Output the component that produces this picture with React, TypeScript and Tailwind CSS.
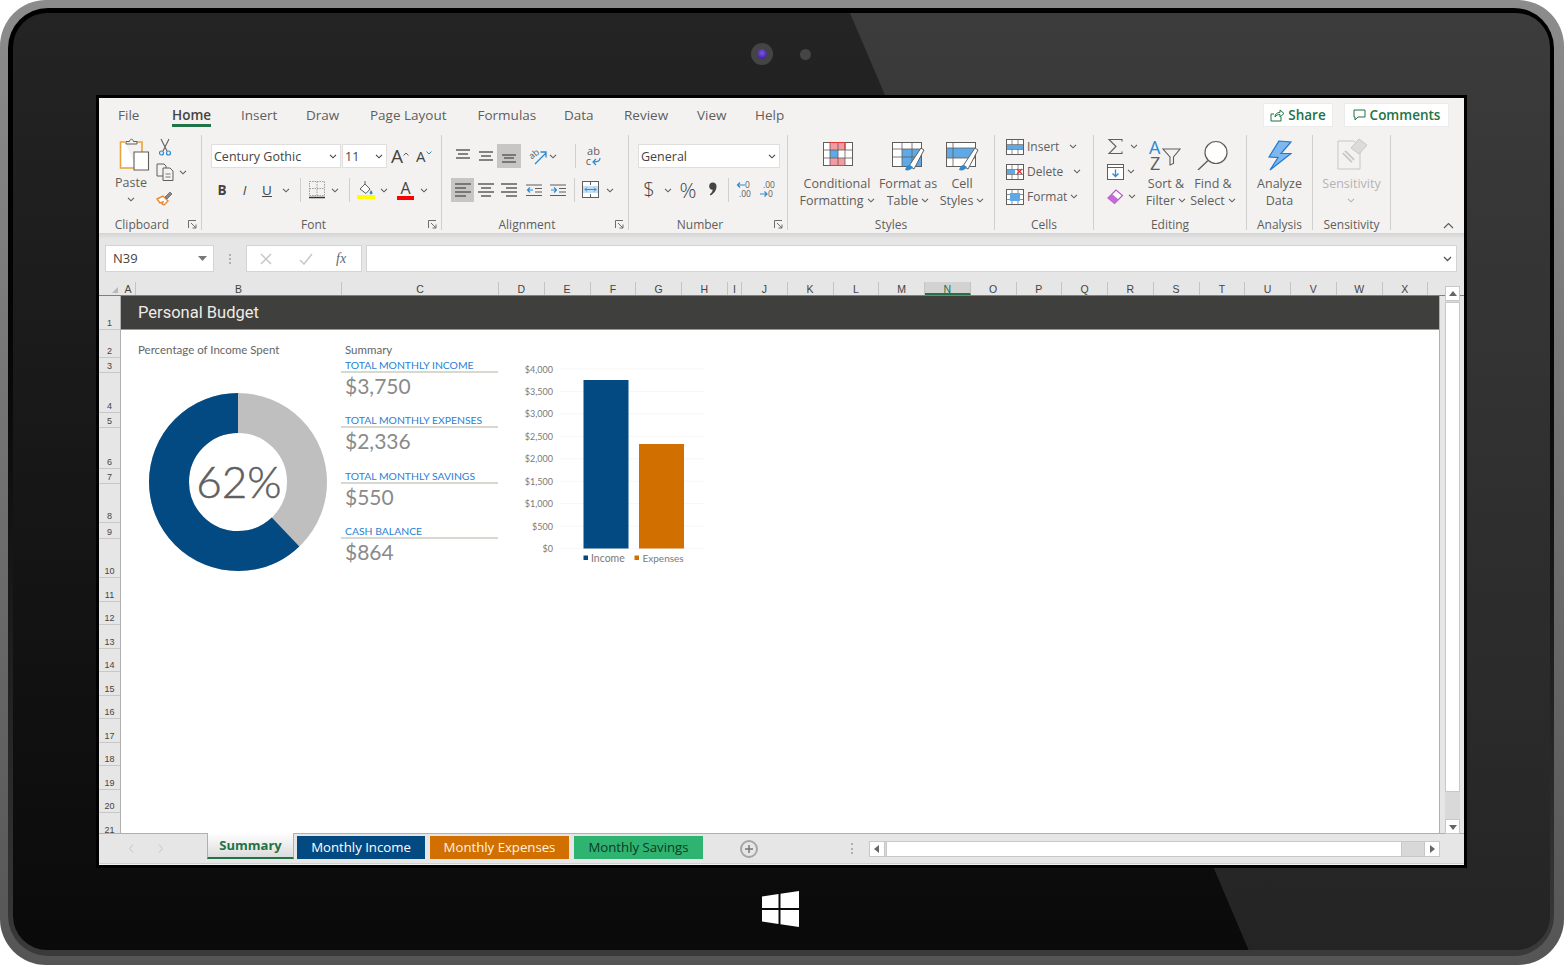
const gray = "#605e5c";
const blue = "#2a8ad4";

const Chev = ({ color = gray }: { color?: string }) => (
  <svg width="8" height="5" viewBox="0 0 8 5" className="shrink-0">
    <path d="M1 .8l3 3 3-3" stroke={color} strokeWidth="1.1" fill="none" />
  </svg>
);

const ChevBox = ({ className = "w-[10px] ml-[4px]" }: { className?: string }) => (
  <span className={"flex justify-center shrink-0 " + className}>
    <Chev />
  </span>
);

const Sep = ({ className }: { className?: string }) => (
  <span className={"w-px h-[24px] bg-[#d2d0ce] shrink-0 " + (className ?? "")} />
);

const Lines = ({ rows }: { rows: number[][] }) => (
  <svg width="16" height="16" viewBox="0 0 16 16" className="shrink-0">
    {rows.map((r, i) => (
      <path key={i} d={`M${r[0]} ${r[2]}H${r[1]}`} stroke={gray} strokeWidth="1.3" />
    ))}
  </svg>
);

const PasteIcon = () => (
  <svg width="32" height="33" viewBox="0 0 32 33" className="ml-[7px]">
    <path d="M6 4H1.500v26H17" stroke="#e8a33d" strokeWidth="1.6" fill="#fff" />
    <path d="M18 4h5v10" stroke="#e8a33d" strokeWidth="1.6" fill="none" />
    <path d="M7 6V3.500h3.500C11 .5 14 .5 14.500 3.500H18V6z" stroke={gray} fill="#f3f2f1" />
    <path d="M15 14h14.500v18H15z" stroke={gray} strokeWidth="1.1" fill="#fff" />
  </svg>
);

const Scissors = () => (
  <svg width="18" height="18" viewBox="0 0 18 18">
    <path d="M5 1l6 12M13 1L7 13" stroke={gray} strokeWidth="1.1" fill="none" />
    <circle cx="5.500" cy="15" r="2" stroke={blue} strokeWidth="1.2" fill="none" />
    <circle cx="12.500" cy="15" r="2" stroke={blue} strokeWidth="1.2" fill="none" />
  </svg>
);

const CopyIcon = () => (
  <svg width="18" height="18" viewBox="0 0 18 18">
    <path d="M7 13H1V1h7l2 2v2" stroke={gray} fill="none" />
    <path d="M7 5h7l3 3v9.500H7z" stroke={gray} fill="#f3f2f1" />
    <path d="M9.500 11h5M9.500 14h5" stroke={gray} strokeWidth=".8" />
  </svg>
);

const Painter = () => (
  <svg width="18" height="16" viewBox="0 0 18 16">
    <path d="M1 9l6-3 5 5-4 4-2-1 1-2-3 1z" fill="#fff" stroke="#e8882a" strokeWidth="1.4" />
    <path d="M9 7l5-5 2 2-5 5z" fill="#8a8886" stroke={gray} strokeWidth=".7" />
  </svg>
);

const Launcher = () => (
  <svg width="9" height="9" viewBox="0 0 9 9" className="absolute right-[4px] top-[2px]">
    <path d="M.5 8V.5H8M3 3l5 5M8 4.500V8H4.500" stroke={gray} strokeWidth=".9" fill="none" />
  </svg>
);

const Caret = ({ color, down }: { color: string; down?: boolean }) => (
  <svg width="6" height="4" viewBox="0 0 6 4" className="mb-[11px]">
    <path d={down ? "M.5 .5l2.500 2.500 2.500-2.500" : "M.5 3.500l2.500-2.500 2.500 2.500"} stroke={color} fill="none" />
  </svg>
);

const BorderIcon = () => (
  <svg width="16" height="18" viewBox="0 0 16 18" className="ml-[2px] shrink-0">
    <path d="M.5 .5h15v14H.5zM8 .5v14M.5 7.500h15" stroke="#a19f9d" strokeDasharray="1.500 1" fill="none" />
    <path d="M0 16.500h16" stroke="#333" strokeWidth="1.400" />
  </svg>
);

const FillIcon = () => (
  <svg width="18" height="20" viewBox="0 0 18 20" className="ml-[7px] shrink-0">
    <path d="M3 9l5-5 5 5-4 4.500z" fill="#fff" stroke={gray} />
    <path d="M8 4V1" stroke={gray} />
    <path d="M14 10c1 1.500 1.500 2 1.500 3a1.300 1.300 0 0 1-2.800 0c0-1 .6-1.500 1.300-3z" fill={blue} />
    <rect x="0" y="15" width="18" height="4" fill="#ffff00" />
  </svg>
);

const Orient = () => (
  <svg width="19" height="18" viewBox="0 0 19 18" className="ml-[7px] shrink-0 overflow-visible">
    <text x="1" y="11" fontSize="9" fill={gray} transform="rotate(-40 5 8)" fontFamily="'Open Sans',sans-serif">ab</text>
    <path d="M7 17L18 6M12.500 5h5.500v5.500" stroke={blue} strokeWidth="1.300" fill="none" />
  </svg>
);

const Indent = ({ flip, className }: { flip?: boolean; className: string }) => (
  <svg width="16" height="16" viewBox="0 0 16 16" className={"shrink-0 " + className}>
    <path d="M0 3h16M9 6.500h7M9 10h7M0 13.500h16" stroke={gray} strokeWidth="1.100" />
    <path d={flip ? "M1 8h5M4 5.500L6.500 8 4 10.500" : "M7 8H1.500M4 5.500L1.500 8 4 10.500"} stroke={blue} strokeWidth="1.200" fill="none" />
  </svg>
);

const Merge = () => (
  <svg width="17" height="18" viewBox="0 0 17 18" className="ml-[7px] shrink-0">
    <rect x=".5" y=".5" width="16" height="16" fill="#fff" stroke={gray} />
    <rect x="1" y="5" width="15" height="7" fill="#bfe0f7" />
    <path d="M3 8.500h11M5 6.500l-2 2 2 2M12 6.500l2 2-2 2" stroke={blue} fill="none" />
    <path d="M8.500 1v3M8.500 13v3" stroke={gray} />
  </svg>
);

const DecimalIcon = ({ inc, className }: { inc?: boolean; className: string }) => (
  <svg width="18" height="20" viewBox="0 0 18 20" className={"shrink-0 overflow-visible " + className}>
    <text x={inc ? 9 : 4} y="8" fontSize="8.500" fill={gray} fontFamily="'Open Sans',sans-serif">{inc ? "0" : ".00"}</text>
    <text x={inc ? 3 : 9} y="17" fontSize="8.500" fill={gray} fontFamily="'Open Sans',sans-serif">{inc ? ".00" : "0"}</text>
    <path d={inc ? "M9 5H1.500M4 2.500L1.500 5 4 7.500" : "M1 14h7M5.500 11.500L8 14l-2.500 2.500"} stroke={blue} strokeWidth="1.200" fill="none" />
  </svg>
);

const CommaIcon = () => (
  <svg width="8" height="14" viewBox="0 0 8 14" className="ml-[11px] mr-[11px] shrink-0 -mt-[2px]">
    <path d="M4 .5a3.500 3.500 0 0 1 3.500 3.800c0 4-2.500 7.500-6 9.200L.8 12.400C2.500 11 3.500 9.500 3.700 7.800A3.600 3.600 0 0 1 4 .5z" fill="#444" />
  </svg>
);

const CondIcon = () => (
  <svg width="30" height="24" viewBox="0 0 30 24">
    <rect x=".5" y=".5" width="29" height="23" fill="#fff" stroke={gray} />
    <rect x="7" y="1" width="15" height="7" fill="#f59aa0" />
    <rect x="7" y="16" width="15" height="7" fill="#f59aa0" />
    <rect x="7" y="8" width="8" height="8" fill="#5ea9e6" />
    <path d="M7 .5v23M15 .5v23M22 .5v23M.5 8h29M.5 16h29" stroke={gray} strokeWidth=".8" />
    <path d="M7 .5h15v7.500M7 23.500h15" stroke="#e23a3a" strokeWidth="1.200" fill="none" />
  </svg>
);

const Brush = () => (
  <>
    <path d="M17 24L29 6l3 2-10 19z" fill="#fff" stroke={gray} />
    <path d="M13 28c3 1 6 0 8-3l-3-2c-3 0-4 2-5 5z" fill={blue} />
  </>
);

const TableIcon = () => (
  <svg width="33" height="30" viewBox="0 0 33 30">
    <rect x=".5" y=".5" width="29" height="24" fill="#fff" stroke={gray} />
    <rect x="10" y="7" width="19" height="17" fill="#5ea9e6" />
    <path d="M10 .5v24M20 .5v24M.5 7h29M.5 15h29" stroke={gray} strokeWidth=".8" />
    <Brush />
  </svg>
);

const CellStyleIcon = () => (
  <svg width="33" height="30" viewBox="0 0 33 30">
    <rect x=".5" y=".5" width="29" height="24" fill="#fff" stroke={gray} />
    <rect x="1" y="6" width="28" height="10" fill="#5ea9e6" />
    <path d="M7 .5v24M.5 6h29M.5 16h29" stroke={gray} strokeWidth=".8" />
    <Brush />
  </svg>
);

const GridSmall = ({ children }: { children?: React.ReactNode }) => (
  <svg width="18" height="16" viewBox="0 0 18 16" className="shrink-0 ml-[11px]">
    <rect x=".5" y=".5" width="17" height="15" fill="#fff" stroke={gray} />
    <path d="M6 .5v15M12 .5v15M.5 5.500h17M.5 10.500h17" stroke={gray} strokeWidth=".7" />
    {children}
  </svg>
);

const SumIcon = () => (
  <svg width="17" height="17" viewBox="0 0 17 17" className="shrink-0">
    <path d="M15 3.500V1.500H2l7 7-7 7h13v-2" stroke={gray} strokeWidth="1.100" fill="none" />
  </svg>
);

const FillDown = () => (
  <svg width="17" height="16" viewBox="0 0 17 16" className="shrink-0">
    <rect x=".5" y=".5" width="16" height="15" fill="#fff" stroke={gray} />
    <path d="M.5 3.500h16" stroke={gray} />
    <path d="M8.500 5.500v7M5.500 9.500l3 3 3-3" stroke={blue} strokeWidth="1.300" fill="none" />
  </svg>
);

const Eraser = () => (
  <svg width="17" height="16" viewBox="0 0 17 16" className="shrink-0">
    <path d="M1 9l8-8 6.500 5.500-8 8z" fill="#fff" stroke="#b45cc8" strokeWidth="1.200" />
    <path d="M1 9l4-4 6.500 5.500-4 4z" fill="#c36bd6" />
  </svg>
);

const SortIcon = () => (
  <svg width="34" height="30" viewBox="0 0 34 30" className="overflow-visible">
    <text x="0" y="14" fontSize="18" fill={blue} fontFamily="'Open Sans',sans-serif">A</text>
    <text x="1" y="30" fontSize="18" fill={gray} fontFamily="'Open Sans',sans-serif">Z</text>
    <path d="M14 9h17l-6.500 8v6.500l-3.500 1.500v-8z" fill="#f3f2f1" stroke={gray} strokeWidth="1.100" />
  </svg>
);

const FindIcon = () => (
  <svg width="34" height="30" viewBox="0 0 34 30">
    <circle cx="20" cy="12.500" r="11" fill="#fff" stroke={gray} strokeWidth="1.200" />
    <path d="M12 20.500L2 30" stroke={gray} strokeWidth="1.400" />
  </svg>
);

const Bolt = () => (
  <svg width="24" height="31" viewBox="0 0 24 31">
    <path d="M11 1L23 2 13 13.500 23 13.500 2 30 10 17.500 1 17z" fill="#7fb8ec" stroke="#1f7ad0" strokeWidth="1.200" />
  </svg>
);

const SensIcon = () => (
  <svg width="30" height="32" viewBox="0 0 30 32" className="-mt-[2px]">
    <path d="M1 3h16l6 6v22H1z" fill="#f3f2f1" stroke="#c8c6c4" />
    <path d="M7 14l9 9" stroke="#c8c6c4" strokeWidth="5" />
    <path d="M7 14l9 9" stroke="#f3f2f1" strokeWidth="1.500" />
    <path d="M14 10l8-9 8 6-8 9z" fill="#dcdbd9" stroke="#c8c6c4" />
  </svg>
);

const Group = ({ className, label, launcher, children }: { className: string; label: string; launcher?: boolean; children: React.ReactNode }) => (
  <div className={"h-[95px] border-r border-[#d2d0ce] flex flex-col shrink-0 " + className}>
    <div className="flex-1 min-h-0">{children}</div>
    <div className={"relative h-[13px] -mb-px leading-[13px] text-center text-[12px] text-[#605e5c] " + (launcher ? "pr-[16px]" : "")}>
      {label}
      {launcher && <Launcher />}
    </div>
  </div>
);

const Combo = ({ className, text }: { className: string; text: string }) => (
  <div className={"h-[24px] bg-white border border-[#e1dfdd] flex items-center justify-between pl-[2px] pr-[3px] text-[12.500px] text-[#444] shrink-0 " + className}>
    <span className="pt-[2px]">{text}</span>
    <Chev color="#444" />
  </div>
);

const TallCol = ({ className, icon, lines, muted }: { className: string; icon: React.ReactNode; lines: React.ReactNode[]; muted?: boolean }) => (
  <div className={"flex flex-col items-center shrink-0 pt-[5px] " + className}>
    <div className="h-[30px] flex items-start justify-center">{icon}</div>
    <div className={"mt-[5px] text-center text-[12.500px] leading-[17px] whitespace-nowrap " + (muted ? "text-[#b5b3b1]" : "text-[#605e5c]")}>
      {lines.map((l, i) => (
        <div key={i} className="flex items-center justify-center gap-[3px] h-[17px]">{l}</div>
      ))}
    </div>
  </div>
);

const tabs = [
  { t: "File", c: "w-[73px] pl-[19px]" },
  { t: "Home", c: "w-[69px]", on: true },
  { t: "Insert", c: "w-[65px]" },
  { t: "Draw", c: "w-[64px]" },
  { t: "Page Layout", c: "w-[107.500px]" },
  { t: "Formulas", c: "w-[86.500px]" },
  { t: "Data", c: "w-[60px]" },
  { t: "Review", c: "w-[73px]" },
  { t: "View", c: "w-[58px]" },
  { t: "Help", c: "w-[50px]" },
];

const cols = [
  { l: "A", c: "w-[15px]" }, { l: "B", c: "w-[206px]" }, { l: "C", c: "w-[157px]" },
  { l: "D", c: "w-[45.750px]" }, { l: "E", c: "w-[45.750px]" }, { l: "F", c: "w-[45.750px]" }, { l: "G", c: "w-[45.750px]" }, { l: "H", c: "w-[45.750px]" },
  { l: "I", c: "w-[14.250px]" }, { l: "J", c: "w-[45.750px]" }, { l: "K", c: "w-[45.750px]" }, { l: "L", c: "w-[45.750px]" }, { l: "M", c: "w-[45.750px]" },
  { l: "N", c: "w-[45.750px]", on: true }, { l: "O", c: "w-[45.750px]" }, { l: "P", c: "w-[45.750px]" }, { l: "Q", c: "w-[45.750px]" }, { l: "R", c: "w-[45.750px]" },
  { l: "S", c: "w-[45.750px]" }, { l: "T", c: "w-[45.750px]" }, { l: "U", c: "w-[45.750px]" }, { l: "V", c: "w-[45.750px]" }, { l: "W", c: "w-[45.750px]" }, { l: "X", c: "w-[45.750px]" },
];

const rows = [
  { n: 1, c: "h-[34px]" }, { n: 2, c: "h-[28px]" }, { n: 3, c: "h-[15px]" }, { n: 4, c: "h-[40px]" }, { n: 5, c: "h-[15px]" },
  { n: 6, c: "h-[41px]" }, { n: 7, c: "h-[15px]" }, { n: 8, c: "h-[39px]" }, { n: 9, c: "h-[16px]" }, { n: 10, c: "h-[39px]" },
  ...[11, 12, 13, 14, 15, 16, 17, 18, 19, 20, 21].map((n) => ({ n, c: "h-[23.500px]" })),
];

const summary = [
  { l: "TOTAL MONTHLY INCOME", v: "$3,750", h: "h-[40px]" },
  { l: "TOTAL MONTHLY EXPENSES", v: "$2,336", h: "h-[41px]" },
  { l: "TOTAL MONTHLY SAVINGS", v: "$550", h: "h-[40px]" },
  { l: "CASH BALANCE", v: "$864", h: "h-[40px]" },
];

const ticks = ["$4,000", "$3,500", "$3,000", "$2,500", "$2,000", "$1,500", "$1,000", "$500", "$0"];

const Donut = () => (
  <svg width="178" height="178" viewBox="0 0 178 178" className="block">
    <circle cx="89" cy="89" r="69" fill="none" stroke="#bfbfbf" strokeWidth="40" />
    <circle cx="89" cy="89" r="69" fill="none" stroke="#044a82" strokeWidth="40" strokeDasharray="268.800 433.500" transform="rotate(-90 89 89) scale(1 -1) translate(0 -178)" />
    <text x="90" y="105" textAnchor="middle" fontSize="44" fill="#5f5f5f" stroke="#5f5f5f" strokeWidth=".5" fontWeight="300" fontFamily="Lato,sans-serif">62%</text>
  </svg>
);

const Chart = () => (
  <svg width="220" height="230" viewBox="0 0 220 230" className="block">
    {ticks.map((t, i) => {
      const y = 19 + i * 22.45;
      return (
        <g key={t}>
          <path d={`M62 ${y}H207`} stroke="#f6f6f6" />
          <text x="55" y={y + 3.500} textAnchor="end" fontSize="9" fill="#7a7a7a" fontFamily="Lato,sans-serif">{t}</text>
        </g>
      );
    })}
    <rect x="85.500" y="30" width="45" height="168.500" fill="#044a82" />
    <rect x="141" y="94" width="45" height="104.500" fill="#d16f00" />
    <rect x="85.500" y="205.500" width="4.500" height="4.500" fill="#044a82" />
    <text x="93" y="211.500" fontSize="10.500" fill="#7a7a7a" fontFamily="Lato,sans-serif">Income</text>
    <rect x="136.500" y="205.500" width="4.500" height="4.500" fill="#d16f00" />
    <text x="144.500" y="211.500" fontSize="10" fill="#7a7a7a" fontFamily="Lato,sans-serif">Expenses</text>
  </svg>
);

const Arrow = ({ d }: { d: string }) => (
  <svg width="8" height="8" viewBox="0 0 8 8">
    <path d={d} fill="#666" />
  </svg>
);

export default function App() {
  return (
    <div className="w-[1564px] h-[966px] bg-white overflow-hidden font-['Open_Sans',sans-serif]">
      <div className="w-full h-[965px] rounded-[46px] bg-gradient-to-b from-[#8c8c8c] to-[#555555] pt-[8px] pl-[8px] pr-[10px] pb-[9px]">
        <div className="h-full rounded-[40px] bg-gradient-to-b from-[#000000] to-[#3a3a3a] pt-[5px] pl-[5px] pr-[4px] pb-[6px]">
          <div className="relative h-full rounded-[34px] overflow-hidden bg-gradient-to-b from-[#242424] to-[#0a0a0a] flex flex-col">
            <svg width="1537" height="937" viewBox="0 0 1537 937" className="absolute left-0 top-0">
              <polygon points="837,0 1537,0 1537,937 1235.600,937" fill="#ffffff" fillOpacity="0.11" />
            </svg>

            {/* camera strip */}
            <div className="relative h-[82px] flex items-center shrink-0">
              <div className="ml-[738px] w-[22px] h-[22px] rounded-full bg-[#444444] flex items-center justify-center">
                <div className="w-[10px] h-[10px] rounded-full bg-[radial-gradient(circle_at_50%_40%,#7a5ad8,#2a0f8a)]" />
              </div>
              <div className="ml-[27px] w-[11px] h-[11px] rounded-full bg-[#454545]" />
            </div>

            {/* screen */}
            <div className="relative ml-[83px] w-[1371px] h-[773px] shrink-0 border-[3px] border-black bg-[#f3f2f1] flex flex-col text-[#605e5c]">
              {/* menu tabs */}
              <div className="h-[34px] flex shrink-0 text-[13.500px] leading-[18px]">
                {tabs.map((t) => (
                  <div key={t.t} className={"pt-[8px] shrink-0 " + t.c}>
                    <span className={t.on ? "inline-block border-b-[3px] border-[#217346] font-semibold text-[#444]" : "inline-block"}>{t.t}</span>
                  </div>
                ))}
                <div className="ml-auto mr-[15px] flex gap-[11px] pt-[5px] font-semibold text-[#217346]">
                  <div className="w-[70px] h-[24px] bg-white border border-[#ebebeb] flex items-center justify-center gap-[4px]">
                    <svg width="14" height="13" viewBox="0 0 14 13">
                      <path d="M4 5H1v7h10V8M5 8c0-3 2-4.500 5-4.500V1l4 3.500L10 8V5.500C8 5.500 6 6 5 8z" stroke="#217346" fill="none" />
                    </svg>
                    Share
                  </div>
                  <div className="w-[105px] h-[24px] bg-white border border-[#ebebeb] flex items-center justify-center gap-[4px]">
                    <svg width="13" height="12" viewBox="0 0 13 12">
                      <path d="M1 1h11v7H5l-3 3V8H1z" stroke="#217346" fill="none" />
                    </svg>
                    Comments
                  </div>
                </div>
              </div>

              {/* ribbon */}
              <div className="h-[101px] pt-[3px] flex shrink-0">
                <Group className="w-[103px]" label="Clipboard" launcher>
                  <div className="flex">
                    <div className="ml-[12px] w-[40px] pt-[3px] flex flex-col items-center">
                      <PasteIcon />
                      <div className="h-[18px] mt-[3px] leading-[18px] text-[12.500px]">Paste</div>
                      <div className="mt-[5px]"><Chev /></div>
                    </div>
                    <div className="ml-[5px] pt-[3px] flex flex-col">
                      <Scissors />
                      <div className="mt-[7px] flex items-center"><CopyIcon /><span className="ml-[5px]"><Chev /></span></div>
                      <div className="mt-[9px]"><Painter /></div>
                    </div>
                  </div>
                </Group>

                <Group className="w-[240px]" label="Font" launcher>
                  <div className="pt-[9px] flex items-center h-[33px]">
                    <Combo className="ml-[9px] w-[130px]" text="Century Gothic" />
                    <Combo className="ml-px w-[45px]" text="11" />
                    <span className="ml-[4px] w-[18px] flex items-end text-[19px] leading-[22px] text-[#444]">A<Caret color={gray} /></span>
                    <span className="ml-[7px] w-[17px] flex items-end text-[15px] leading-[20px] text-[#444]">A<Caret color={blue} down /></span>
                  </div>
                  <div className="mt-[10px] flex items-center h-[24px] text-[#444]">
                    <span className="ml-[9px] w-[22px] text-center text-[13.500px] font-bold">B</span>
                    <span className="w-[23px] text-center text-[13.500px] italic">I</span>
                    <span className="w-[22px] text-center text-[13.500px] underline">U</span>
                    <ChevBox className="w-[16px]" />
                    <Sep className="ml-[6px]" />
                    <span className="ml-[6px]"><BorderIcon /></span>
                    <ChevBox className="ml-[5px] w-[10px]" />
                    <Sep className="ml-[9px]" />
                    <FillIcon />
                    <ChevBox />
                    <span className="ml-[8px] w-[17px] flex flex-col items-center leading-[15px] text-[16px]">
                      A
                      <span className="block w-[17px] h-[4px] bg-[#ff0000]" />
                    </span>
                    <ChevBox className="ml-[5px] w-[10px]" />
                  </div>
                </Group>

                <Group className="w-[187px]" label="Alignment" launcher>
                  <div className="pt-[9px] flex items-center h-[33px]">
                    <span className="ml-[13px]"><Lines rows={[[1, 15, 2], [3, 13, 6], [1, 15, 10]]} /></span>
                    <span className="ml-[7px]"><Lines rows={[[1, 15, 4], [3, 13, 8], [1, 15, 12]]} /></span>
                    <span className="ml-[3px] w-[24px] h-[24px] bg-[#c8c6c4] flex items-center justify-center"><Lines rows={[[1, 15, 7], [3, 13, 10], [1, 15, 14]]} /></span>
                    <Orient />
                    <ChevBox className="ml-px w-[10px]" />
                    <Sep className="ml-[17px]" />
                    <span className="ml-[9px] w-[17px] flex flex-col items-center text-[11px] leading-[10px] text-[#605e5c]">
                      <span className="h-[10px]">ab</span>
                      <span className="flex items-center h-[10px]">c<svg width="10" height="9" viewBox="0 0 10 9"><path d="M9 1c0 3-2 4-6 4M5 2L2 5l3 3" stroke={blue} strokeWidth="1.200" fill="none" /></svg></span>
                    </span>
                  </div>
                  <div className="mt-[10px] flex items-center h-[24px]">
                    <span className="ml-[9px] w-[23px] h-[24px] bg-[#c8c6c4] flex items-center justify-center"><Lines rows={[[0, 16, 2], [0, 11, 6], [0, 16, 10], [0, 11, 14]]} /></span>
                    <span className="ml-[4px]"><Lines rows={[[0, 16, 2], [3, 13, 6], [0, 16, 10], [3, 13, 14]]} /></span>
                    <span className="ml-[7px]"><Lines rows={[[0, 16, 2], [5, 16, 6], [0, 16, 10], [5, 16, 14]]} /></span>
                    <Indent className="ml-[9px]" />
                    <Indent className="ml-[8px]" flip />
                    <Sep className="ml-[8px]" />
                    <Merge />
                    <ChevBox className="ml-[6px] w-[10px]" />
                  </div>
                </Group>

                <Group className="w-[159px]" label="Number" launcher>
                  <div className="pt-[9px] flex items-center h-[33px]">
                    <Combo className="ml-[9px] w-[142px]" text="General" />
                  </div>
                  <div className="mt-[10px] flex items-center h-[24px] text-[#444]">
                    <span className="ml-[13px] w-[14px] text-center text-[20px] leading-[24px] font-light">$</span>
                    <ChevBox className="ml-[7px] w-[10px]" />
                    <span className="ml-[5px] w-[20px] text-center text-[21px] leading-[24px] font-light">%</span>
                    <CommaIcon />
                    <Sep />
                    <DecimalIcon inc className="ml-[7px]" />
                    <DecimalIcon className="ml-[5px]" />
                  </div>
                </Group>

                <Group className="w-[207px]" label="Styles">
                  <div className="flex">
                    <TallCol className="ml-[13px] w-[72px]" icon={<span className="block pt-[2px] pl-px"><CondIcon /></span>} lines={["Conditional", <>Formatting <Chev /></>]} />
                    <TallCol className="ml-[7px] w-[56px]" icon={<span className="block pt-[2px] pl-px"><TableIcon /></span>} lines={["Format as", <>Table <Chev /></>]} />
                    <TallCol className="ml-[4px] w-[44px]" icon={<span className="block pt-[2px] pl-px"><CellStyleIcon /></span>} lines={["Cell", <>Styles <Chev /></>]} />
                  </div>
                </Group>

                <Group className="w-[99px]" label="Cells">
                  <div className="flex flex-col text-[12px]">
                    <div className="h-[25px] flex items-center -mt-px">
                      <GridSmall><rect x="1" y="6" width="16" height="4" fill="#5ea9e6" /></GridSmall>
                      <span className="ml-[3px]">Insert</span>
                      <span className="ml-[10px]"><Chev /></span>
                    </div>
                    <div className="h-[25px] flex items-center">
                      <GridSmall><rect x="1" y="6" width="8" height="4" fill="#5ea9e6" /><path d="M11 5l5 5M16 5l-5 5" stroke="#e23a3a" strokeWidth="1.300" /></GridSmall>
                      <span className="ml-[3px]">Delete</span>
                      <span className="ml-[10px]"><Chev /></span>
                    </div>
                    <div className="h-[25px] flex items-center">
                      <GridSmall><rect x="4" y="4" width="10" height="8" fill="#5ea9e6" /></GridSmall>
                      <span className="ml-[3px]">Format</span>
                      <span className="ml-[3px]"><Chev /></span>
                    </div>
                  </div>
                </Group>

                <Group className="w-[153px]" label="Editing">
                  <div className="flex">
                    <div className="-mt-px ml-[13px] w-[39px] flex flex-col">
                      <div className="h-[25px] flex items-center"><SumIcon /><span className="ml-[6px]"><Chev /></span></div>
                      <div className="h-[25px] flex items-center"><FillDown /><span className="ml-[3px]"><Chev /></span></div>
                      <div className="h-[25px] flex items-center"><Eraser /><span className="ml-[4px]"><Chev /></span></div>
                    </div>
                    <TallCol className="w-[40px]" icon={<SortIcon />} lines={["Sort &", <>Filter <Chev /></>]} />
                    <TallCol className="ml-[4px] w-[46px]" icon={<FindIcon />} lines={["Find &", <>Select <Chev /></>]} />
                  </div>
                </Group>

                <Group className="w-[66px]" label="Analysis">
                  <TallCol className="w-full" icon={<Bolt />} lines={["Analyze", "Data"]} />
                </Group>

                <Group className="w-[78px]" label="Sensitivity">
                  <TallCol className="w-full" muted icon={<SensIcon />} lines={["Sensitivity", <Chev color="#b5b3b1" />]} />
                </Group>

                <div className="ml-auto mr-[10px] self-end mb-[4px]">
                  <svg width="11" height="7" viewBox="0 0 11 7"><path d="M1 6l4.500-4.500L10 6" stroke={gray} strokeWidth="1.200" fill="none" /></svg>
                </div>
              </div>

              {/* formula bar */}
              <div className="h-[49px] shrink-0 pt-[12px] bg-gradient-to-b from-[#d4d4d4] via-[#e6e6e6] via-[12%] to-[#e6e6e6]">
                <div className="flex items-center h-[27px]">
                  <div className="ml-[6px] w-[109px] h-[27px] bg-white border border-[#d4d4d4] flex items-center justify-between pl-[7px] pr-[6px] text-[13px] text-[#444]">
                    N39
                    <svg width="9" height="5" viewBox="0 0 9 5"><path d="M0 0h9L4.500 5z" fill="#777" /></svg>
                  </div>
                  <div className="ml-[13px] w-[6px] flex flex-col items-center gap-[2px]">
                    <span className="w-[2px] h-[2px] bg-[#b0b0b0]" />
                    <span className="w-[2px] h-[2px] bg-[#b0b0b0]" />
                    <span className="w-[2px] h-[2px] bg-[#b0b0b0]" />
                  </div>
                  <div className="ml-[13px] w-[116px] h-[27px] bg-white border border-[#d4d4d4] flex items-center">
                    <svg width="12" height="12" viewBox="0 0 12 12" className="ml-[13px]"><path d="M1 1l10 10M11 1L1 11" stroke="#c8c8c8" strokeWidth="1.500" /></svg>
                    <svg width="14" height="12" viewBox="0 0 14 12" className="ml-[27px]"><path d="M1 7l4 4 8-10" stroke="#c8c8c8" strokeWidth="1.500" fill="none" /></svg>
                    <span className="ml-[23px] text-[14px] italic text-[#666] font-['Liberation_Serif',serif]">fx</span>
                  </div>
                  <div className="ml-[4px] w-[1091px] h-[27px] bg-white border border-[#d4d4d4] flex items-center justify-end pr-[4px]">
                    <svg width="9" height="6" viewBox="0 0 9 6"><path d="M1 1l3.500 3.500L8 1" stroke="#555" strokeWidth="1.300" fill="none" /></svg>
                  </div>
                </div>
              </div>

              {/* column headers */}
              <div className="h-[14px] shrink-0 flex bg-[#e6e6e6] border-b border-[#7f7f7f] font-['Liberation_Sans',sans-serif] text-[10.500px] leading-[13px] text-[#444]">
                <div className="w-[22px] shrink-0 flex items-end justify-end pr-[3px] pb-[2px]">
                  <svg width="6" height="6" viewBox="0 0 6 6"><path d="M6 0v6H0z" fill="#b8b8b8" /></svg>
                </div>
                {cols.map((c) => (
                  <div key={c.l} className={"shrink-0 text-center pt-px border-r border-[#c4c4c4] " + c.c + (c.on ? " bg-[#d2d2d2] text-[#217346] border-b-2 border-b-[#217346]" : "")}>{c.l}</div>
                ))}
              </div>

              {/* sheet */}
              <div className="h-[537px] shrink-0 flex overflow-hidden">
                <div className="w-[22px] shrink-0 bg-[#e6e6e6] border-r border-[#b0b0b0] font-['Liberation_Sans',sans-serif] text-[9px] text-[#444]">
                  {rows.map((r) => (
                    <div key={r.n} className={"flex items-end justify-center border-b border-[#c8c8c8] leading-[12px] " + r.c}>{r.n}</div>
                  ))}
                </div>

                <div className="w-[1319px] shrink-0 bg-white border-r border-[#b0b0b0]">
                  <div className="h-[34px] bg-[#3f3f3e] pl-[17px] pt-[2px] flex items-center text-[16.500px] text-[#f0ece4] font-['Roboto',sans-serif] border-b border-[#999]">Personal Budget</div>
                  <div className="flex font-['Lato',sans-serif]">
                    <div className="ml-[14px] w-[206px] shrink-0">
                      <div className="h-[28px] pl-[3px] pt-[12px] text-[11.500px] leading-[16px] text-[#666] whitespace-nowrap">Percentage of Income Spent</div>
                      <div className="ml-[14px] mt-[35px]"><Donut /></div>
                    </div>
                    <div className="w-[157px] shrink-0">
                      <div className="h-[28px] pl-[4px] pt-[12px] text-[11.500px] leading-[16px] text-[#666]">Summary</div>
                      {summary.map((s) => (
                        <div key={s.l}>
                          <div className="h-[15px] pl-[4px] border-b-2 border-[#d8d8d2] text-[10.400px] leading-[15px] text-[#2a7fd4] whitespace-nowrap">{s.l}</div>
                          <div className={"pl-[4px] text-[21px] leading-[26px] text-[#8a8a8a] " + s.h}>{s.v}</div>
                        </div>
                      ))}
                    </div>
                    <div className="mt-[20px] shrink-0"><Chart /></div>
                  </div>
                </div>

                <div className="flex-1 bg-[#e6e6e6]" />
              </div>

              {/* sheet tabs */}
              <div className="h-[31px] shrink-0 bg-[#e6e6e6] border-t border-[#b0b0b0] border-b border-b-[#cfcfcf] flex text-[13.200px]">
                <div className="w-[108px] shrink-0 flex items-center text-[#c0c0c0] pl-[30px] gap-[24px]">
                  <svg width="5" height="9" viewBox="0 0 5 9"><path d="M4 .5L.5 4.500 4 8.500" stroke="#c4c4c4" fill="none" /></svg>
                  <svg width="5" height="9" viewBox="0 0 5 9"><path d="M1 .5l3.500 4-3.500 4" stroke="#c4c4c4" fill="none" /></svg>
                </div>
                <div className="w-[87px] h-[26px] shrink-0 bg-gradient-to-b from-white to-[#dcdcdc] border-x border-[#b0b0b0] border-b-2 border-b-[#217346] -mt-px pt-[2px] flex items-center justify-center font-bold text-[13px] text-[#217346]">Summary</div>
                <div className="ml-[3px] mt-[2px] w-[128px] h-[23px] shrink-0 bg-[#044a82] text-white flex items-center justify-center">Monthly Income</div>
                <div className="ml-[5px] mt-[2px] w-[139px] h-[23px] shrink-0 bg-[#d17000] text-[#fff2e0] flex items-center justify-center">Monthly Expenses</div>
                <div className="ml-[5px] mt-[2px] w-[129px] h-[23px] shrink-0 bg-[#2fb371] text-[#0b3a22] flex items-center justify-center">Monthly Savings</div>
                <div className="ml-[37px] mt-[6px] w-[18px] h-[18px] shrink-0 rounded-full border-2 border-[#a6a6a6] flex items-center justify-center">
                  <svg width="10" height="10" viewBox="0 0 10 10"><path d="M5 1v8M1 5h8" stroke="#777" strokeWidth="1.500" /></svg>
                </div>
                <div className="ml-[92px] mt-[9px] w-[3px] h-[11px] flex flex-col justify-between items-center">
                  <span className="w-[2px] h-[2px] bg-[#b0b0b0]" />
                  <span className="w-[2px] h-[2px] bg-[#b0b0b0]" />
                  <span className="w-[2px] h-[2px] bg-[#b0b0b0]" />
                </div>
                <div className="ml-[16px] mt-[7px] w-[571px] h-[16px] flex bg-[#d8d8d8] border border-[#c8c8c8] shrink-0">
                  <div className="w-[15px] bg-white border-r border-[#c8c8c8] flex items-center justify-center"><Arrow d="M6 0v8L1 4z" /></div>
                  <div className="ml-px w-[516px] bg-white border-x border-[#c8c8c8]" />
                  <div className="ml-auto w-[15px] bg-white border-l border-[#c8c8c8] flex items-center justify-center"><Arrow d="M2 0v8l5-4z" /></div>
                </div>
              </div>

              {/* scrollbar sits over the header strip and the sheet */}
              <div className="absolute left-[1346px] top-[188px] w-[15px] h-[548px] bg-[#d9d9d9] flex flex-col">
                <div className="h-[15px] bg-white border border-[#c8c8c8] flex items-center justify-center"><Arrow d="M0 6h8L4 1z" /></div>
                <div className="mt-px h-[490px] bg-white border border-[#c8c8c8]" />
                <div className="mt-auto h-[15px] bg-white border border-[#c8c8c8] flex items-center justify-center"><Arrow d="M0 2h8L4 7z" /></div>
              </div>
            </div>

            {/* home button */}
            <div className="relative flex-1 flex items-center">
              <svg width="37" height="36" viewBox="0 0 37 36" className="ml-[749px]">
                <path d="M0 5.500L16.500 3v14H0zM18.500 2.700L37 0v17H18.500zM0 19h16.500v14L0 30.500zM18.500 19H37v17l-18.500-2.700z" fill="#ffffff" />
              </svg>
            </div>
          </div>
        </div>
      </div>
    </div>
  );
}
